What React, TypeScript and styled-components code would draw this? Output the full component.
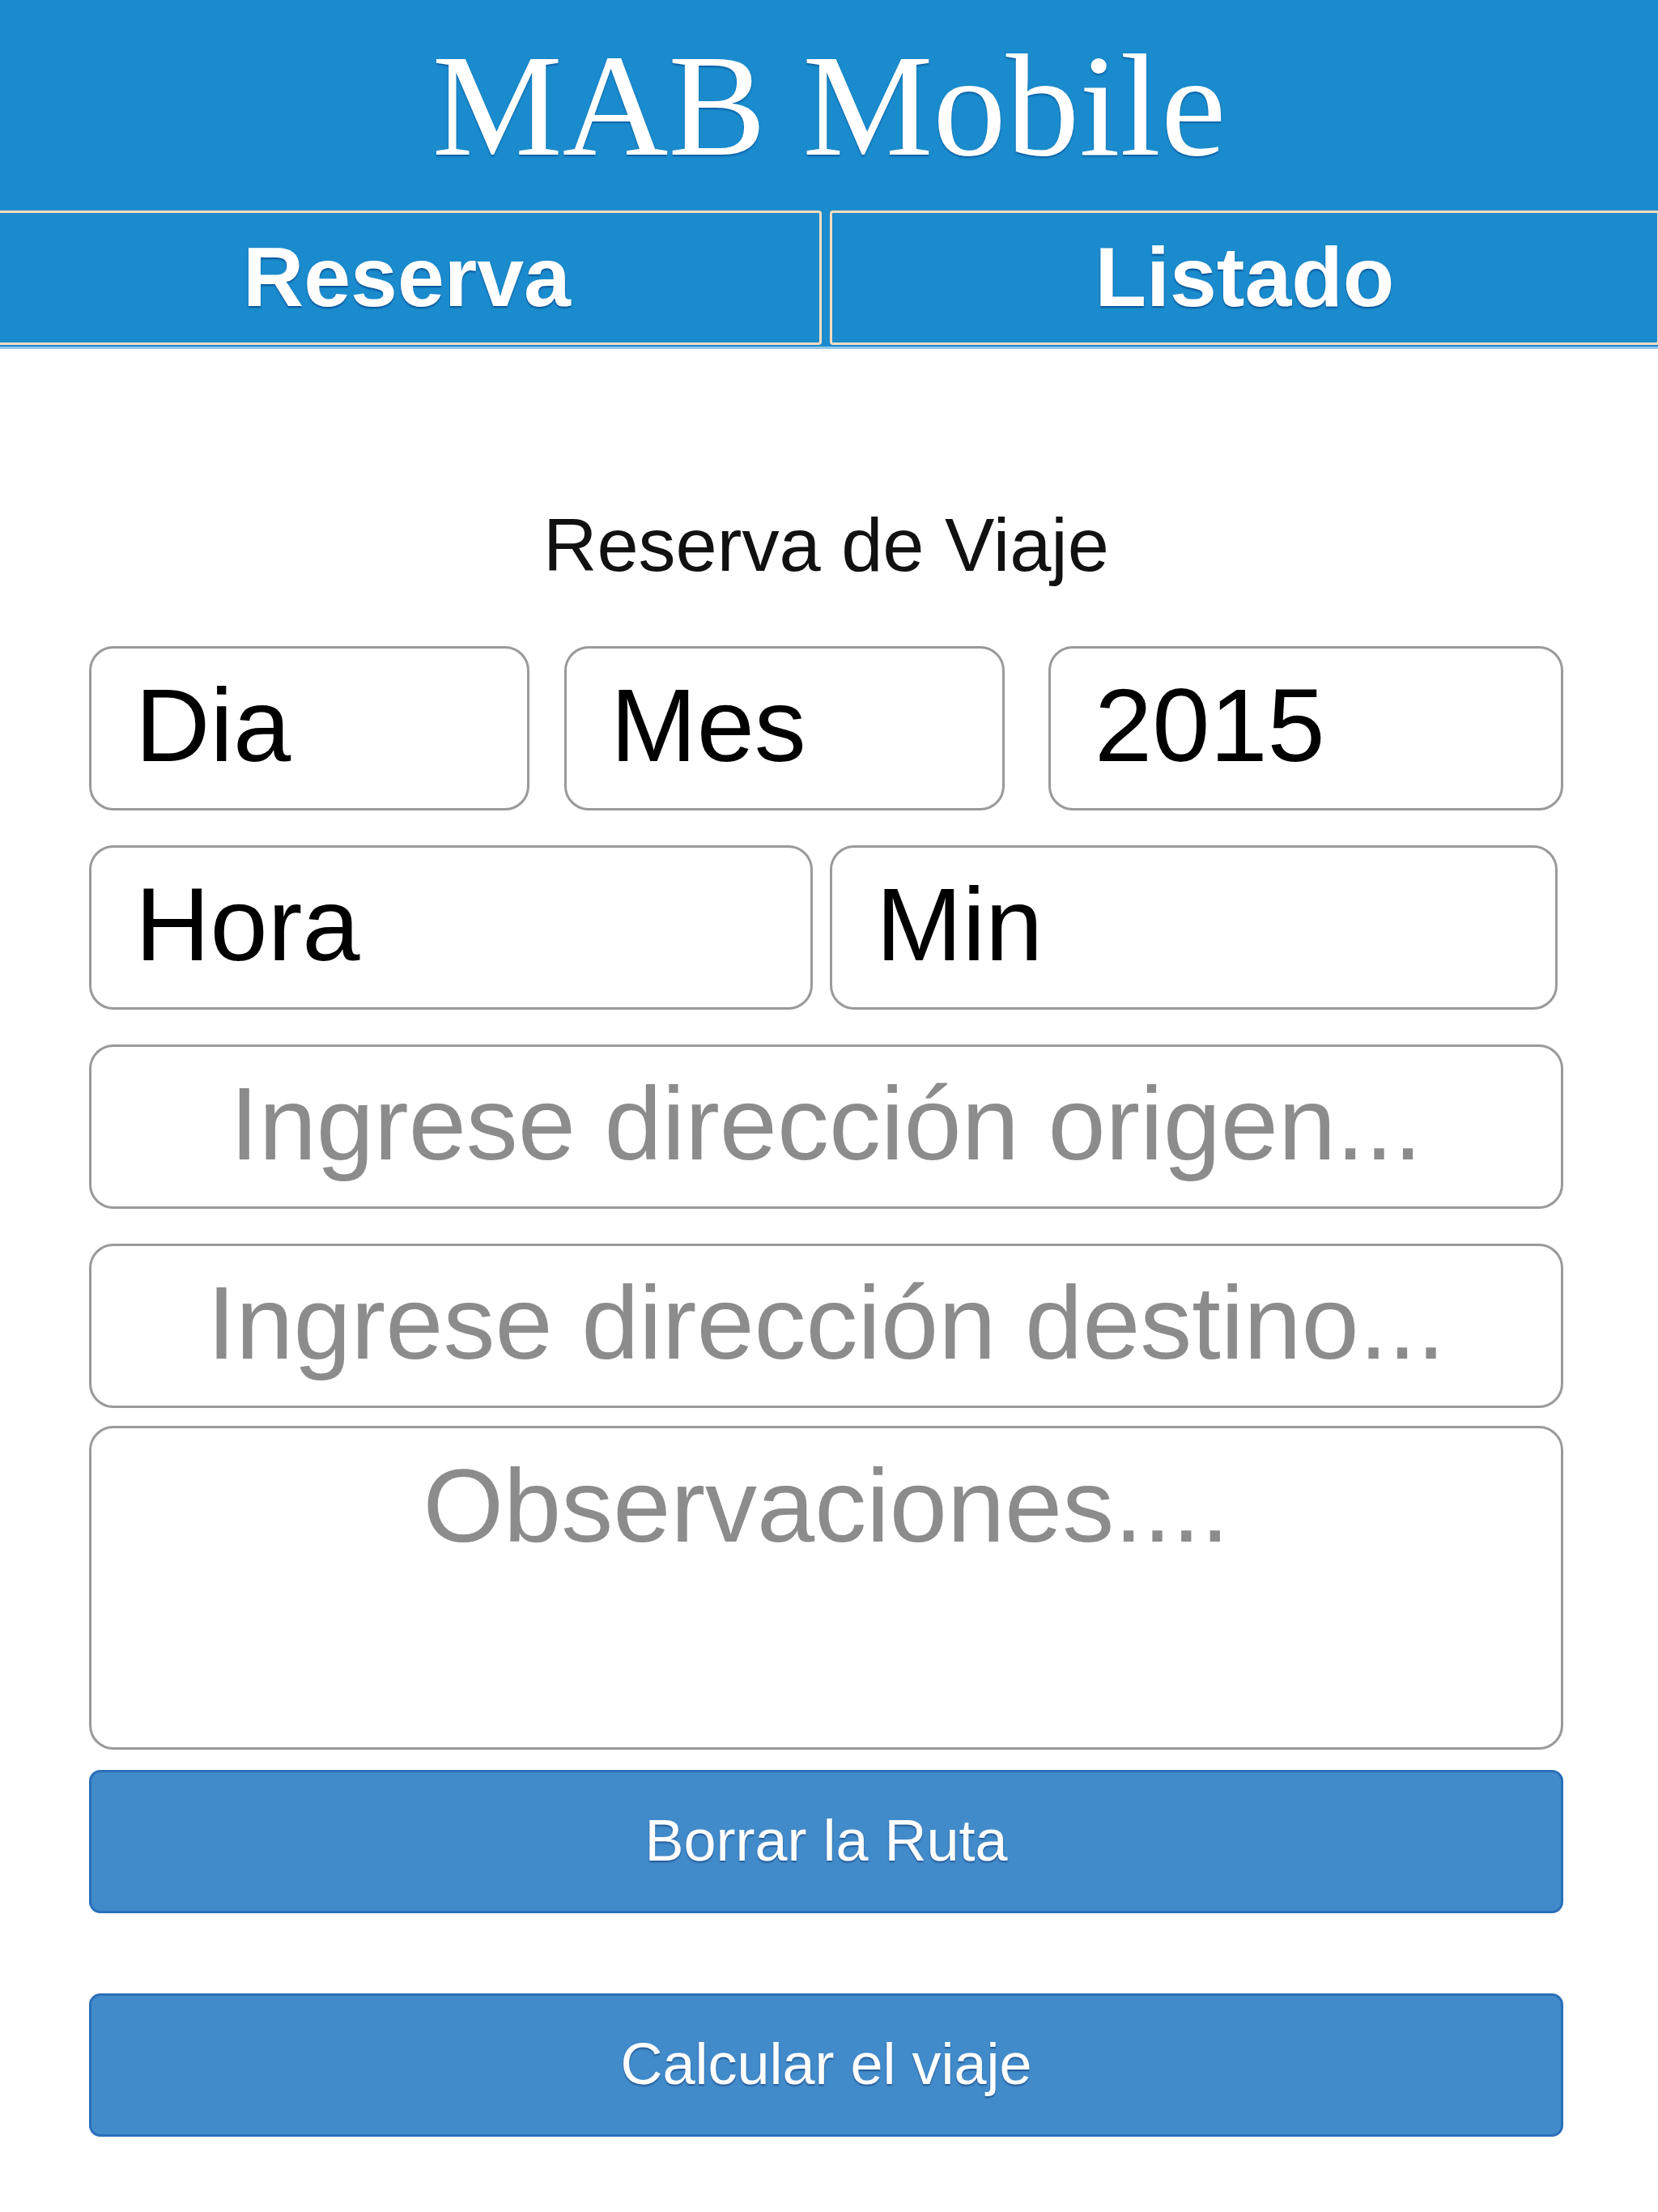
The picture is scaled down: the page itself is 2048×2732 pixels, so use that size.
import React from 'react';
import styled, { createGlobalStyle } from 'styled-components';

const GlobalStyle = createGlobalStyle`
  html, body {
    margin: 0;
    padding: 0;
    background: #ffffff;
  }
  body {
    font-family: "Liberation Sans", Arial, sans-serif;
  }
`;

const Page = styled.div`
  width: 2048px;
  min-height: 2732px;
  background: #ffffff;
`;

const Header = styled.header`
  height: 258px;
  box-sizing: border-box;
  padding-top: 26px;
  background: #1a8bcc;
  text-align: center;
  color: #ffffff;
  font-family: "Liberation Serif", "Times New Roman", serif;
  font-size: 181px;
  line-height: normal;
  text-shadow: 0 2px 2px rgba(0, 70, 140, 0.6);
`;

const TabBar = styled.nav`
  display: flex;
  gap: 10px;
  background: #1a8bcc;
  margin-left: -10px;
  margin-right: -2px;
  padding-top: 2px;
  padding-bottom: 2px;
  border-bottom: 3px solid #8fc6ea;
  overflow: hidden;
`;

const Tab = styled.button`
  flex: 1;
  margin: 0;
  padding: 20px 0 22px;
  background: #1a8bcc;
  border: 3px solid #fcdcc0;
  border-radius: 4px;
  color: #ffffff;
  font-family: "Liberation Sans", Arial, sans-serif;
  font-weight: bold;
  font-size: 104px;
  line-height: 118px;
  text-shadow: 0 2px 2px rgba(0, 60, 130, 0.7);
  cursor: pointer;
`;

const Content = styled.main`
  padding: 190px 117px 0 110px;
  display: flex;
  flex-direction: column;
`;

const Heading = styled.h2`
  margin: 0 0 72px;
  text-align: center;
  font-family: "Liberation Sans", Arial, sans-serif;
  font-weight: normal;
  font-size: 92px;
  line-height: normal;
  color: #111111;
`;

const Row = styled.div<{ $gap: number }>`
  display: flex;
  gap: ${p => p.$gap}px;
  margin-bottom: 43px;
`;

const Field = styled.input<{ $w?: number; $center?: boolean }>`
  box-sizing: border-box;
  width: ${p => (p.$w ? `${p.$w}px` : '100%')};
  flex: ${p => (p.$w ? 'none' : '1')};
  height: 203px;
  margin: 0;
  padding: 0 0 8px 54px;
  ${p => p.$center && 'padding-left: 0; text-align: center;'}
  border: 3px solid #9a9a9a;
  border-radius: 30px;
  background: #ffffff;
  font-family: "Liberation Sans", Arial, sans-serif;
  font-size: 128px;
  color: #000000;
  outline: none;

  &::placeholder {
    color: #8c8c8c;
    opacity: 1;
  }
`;

const Notes = styled.textarea`
  box-sizing: border-box;
  width: 100%;
  height: 400px;
  margin: -21px 0 0;
  padding: 22px 20px 0;
  border: 3px solid #9a9a9a;
  border-radius: 30px;
  background: #ffffff;
  resize: none;
  text-align: center;
  font-family: "Liberation Sans", Arial, sans-serif;
  font-size: 128px;
  line-height: normal;
  color: #000000;
  outline: none;

  &::placeholder {
    color: #8c8c8c;
    opacity: 1;
  }
`;

const Action = styled.button<{ $top: number }>`
  box-sizing: border-box;
  width: 100%;
  height: 177px;
  margin: ${p => p.$top}px 0 0;
  padding: 0 0 4px;
  background: #428bca;
  border: 3px solid #2a6fb9;
  border-radius: 14px;
  color: #ffffff;
  font-family: "Liberation Sans", Arial, sans-serif;
  font-size: 72px;
  text-shadow: 0 2px 2px rgba(0, 40, 100, 0.5);
  cursor: pointer;
`;

const App: React.FC = () => {
  return (
    <>
      <GlobalStyle />
      <Page>
        <Header>MAB Mobile</Header>
        <TabBar>
          <Tab>Reserva</Tab>
          <Tab>Listado</Tab>
        </TabBar>
        <Content>
          <Heading>Reserva de Viaje</Heading>
          <Row $gap={0}>
            <Field $w={544} defaultValue="Dia" />
            <Field $w={544} defaultValue="Mes" style={{ marginLeft: 43 }} />
            <Field $w={636} defaultValue="2015" style={{ marginLeft: 54 }} />
          </Row>
          <Row $gap={21}>
            <Field $w={894} defaultValue="Hora" />
            <Field $w={899} defaultValue="Min" />
          </Row>
          <Row $gap={0}>
            <Field $center placeholder="Ingrese dirección origen..." />
          </Row>
          <Row $gap={0}>
            <Field $center placeholder="Ingrese dirección destino..." />
          </Row>
          <Notes placeholder="Observaciones...." />
          <Action $top={25}>Borrar la Ruta</Action>
          <Action $top={99}>Calcular el viaje</Action>
        </Content>
      </Page>
    </>
  );
};

export default App;
